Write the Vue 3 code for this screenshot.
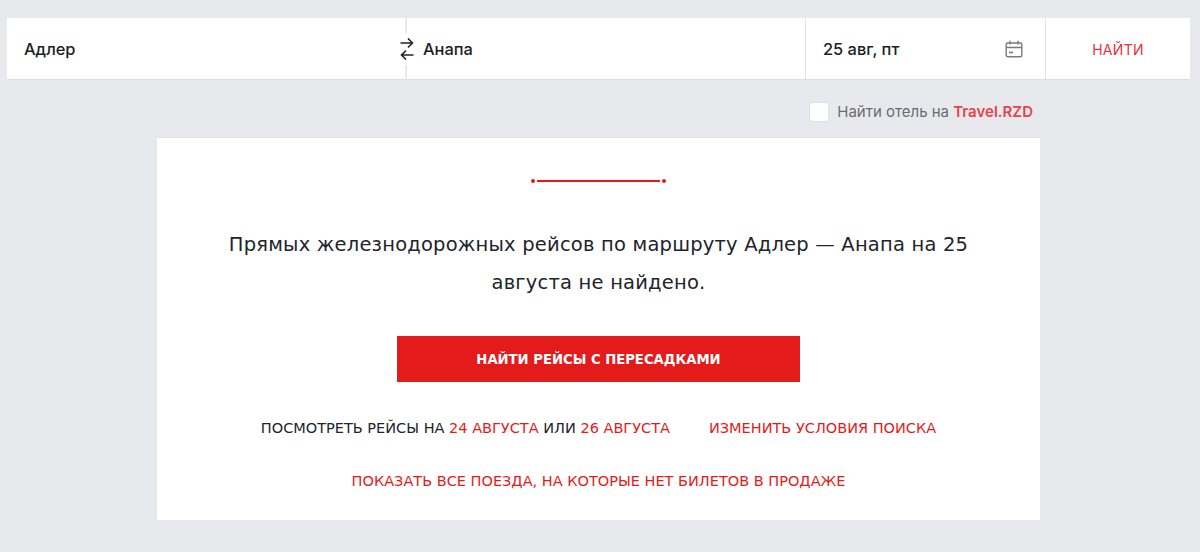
<script setup>
const cities = { from: 'Адлер', to: 'Анапа' };
</script>

<template>
  <div class="page">
    <div class="search">
      <div class="field from">{{ cities.from }}</div>
      <div class="field to">
        <svg class="swap" width="14" height="22" viewBox="0 0 14 22" fill="none" stroke="#22242a" stroke-width="1.6">
          <path d="M0.5 5H12.5M8 .5 12.5 5 8 9.5" />
          <path d="M13.5 17H1.5M6 12.5 1.5 17 6 21.5" />
        </svg>
        {{ cities.to }}
      </div>
      <div class="field date">
        <span>25 авг, пт</span>
        <svg width="18" height="18" viewBox="0 0 18 18" fill="none" stroke="#777a80" stroke-width="1.4">
          <rect x="1.2" y="3" width="15.6" height="13.8" rx="1.5" />
          <path d="M1.2 7.5h15.6M5 .8v3.6M13 .8v3.6" />
          <path d="M4 12.5h4" stroke-width="1.6" />
        </svg>
      </div>
      <div class="field submit">НАЙТИ</div>
    </div>

    <div class="hotel">
      <span class="check"></span>
      <span>Найти отель на <b>Travel.RZD</b></span>
    </div>

    <div class="card">
      <div class="ornament"><i></i><span></span><i></i></div>
      <p class="message">Прямых железнодорожных рейсов по маршруту Адлер — Анапа на 25 августа не найдено.</p>
      <button class="main-btn">НАЙТИ РЕЙСЫ С ПЕРЕСАДКАМИ</button>
      <div class="links">
        <span>ПОСМОТРЕТЬ РЕЙСЫ НА <a>24 АВГУСТА</a> ИЛИ <a>26 АВГУСТА</a></span>
        <a>ИЗМЕНИТЬ УСЛОВИЯ ПОИСКА</a>
      </div>
      <a class="all">ПОКАЗАТЬ ВСЕ ПОЕЗДА, НА КОТОРЫЕ НЕТ БИЛЕТОВ В ПРОДАЖЕ</a>
    </div>
  </div>
</template>

<style>
html, body {
  background: #e8e9ed;
}
</style>

<style scoped>
.page {
  height: 552px;
  padding-top: 18px;
  box-sizing: border-box;
  background: #e8e9ed;
  overflow: hidden;
}

.search {
  display: flex;
  height: 62px;
  margin: 0 10px 0 7px;
  background: #fff;
  border-bottom: 1px solid #dcdde0;
  box-sizing: border-box;
  font-family: Inter, "Noto Sans", sans-serif;
  font-size: 16.4px;
  font-weight: 500;
  color: #1c1e24;
}

.field {
  display: flex;
  align-items: center;
  box-sizing: border-box;
  padding-top: 1px;
}

.from {
  width: 398px;
  padding-left: 17px;
}

.to {
  position: relative;
  width: 400px;
  padding-left: 16px;
  border-left: 2px solid #e8e9ed;
}

.swap {
  position: absolute;
  left: -7px;
  top: 15px;
  padding: 5px 0;
  background: #fff;
}

.date {
  width: 240px;
  padding-left: 17px;
  padding-right: 22px;
  justify-content: space-between;
  border-left: 1px solid #dfe0e4;
}

.submit {
  flex: 1;
  justify-content: center;
  border-left: 1px solid #dfe0e4;
  color: #e8303a;
  font-size: 14px;
  font-weight: 400;
  letter-spacing: 0.3px;
}

.hotel {
  display: flex;
  align-items: center;
  justify-content: flex-end;
  gap: 8px;
  height: 57px;
  padding-top: 6px;
  padding-right: 167px;
  box-sizing: border-box;
  font-family: Inter, "Noto Sans", sans-serif;
  font-size: 15px;
  color: #6a6c74;
}

.hotel b {
  color: #e8434a;
  font-weight: 600;
}

.check {
  width: 18px;
  height: 18px;
  background: #fff;
  border: 1px solid #dfe0e4;
  border-radius: 3px;
}

.card {
  display: flex;
  flex-direction: column;
  align-items: center;
  width: 883px;
  height: 383px;
  margin-left: 157px;
  background: #fff;
  border-top: 1px solid #dfe0e4;
  box-sizing: border-box;
  font-family: "DejaVu Sans", sans-serif;
}

.ornament {
  display: flex;
  align-items: center;
  gap: 2px;
  margin-top: 41px;
}

.ornament i {
  width: 4px;
  height: 4px;
  border-radius: 50%;
  background: #e31b1b;
}

.ornament span {
  width: 123px;
  height: 2px;
  background: #ee1414;
}

.message {
  width: 760px;
  margin: 43px 0 0;
  font-size: 19.5px;
  letter-spacing: 0.2px;
  line-height: 38px;
  text-align: center;
  color: #22242c;
}

.main-btn {
  width: 403px;
  height: 46px;
  margin-top: 34px;
  border: none;
  background: #e31b1b;
  color: #fff;
  font-family: inherit;
  font-size: 13.2px;
  font-weight: 700;
}

.links {
  display: flex;
  gap: 39px;
  margin-top: 38px;
  font-size: 14.5px;
  color: #22242c;
}

a {
  color: #e31b1b;
}

.all {
  margin-top: 37px;
  font-size: 14.5px;
}
</style>
